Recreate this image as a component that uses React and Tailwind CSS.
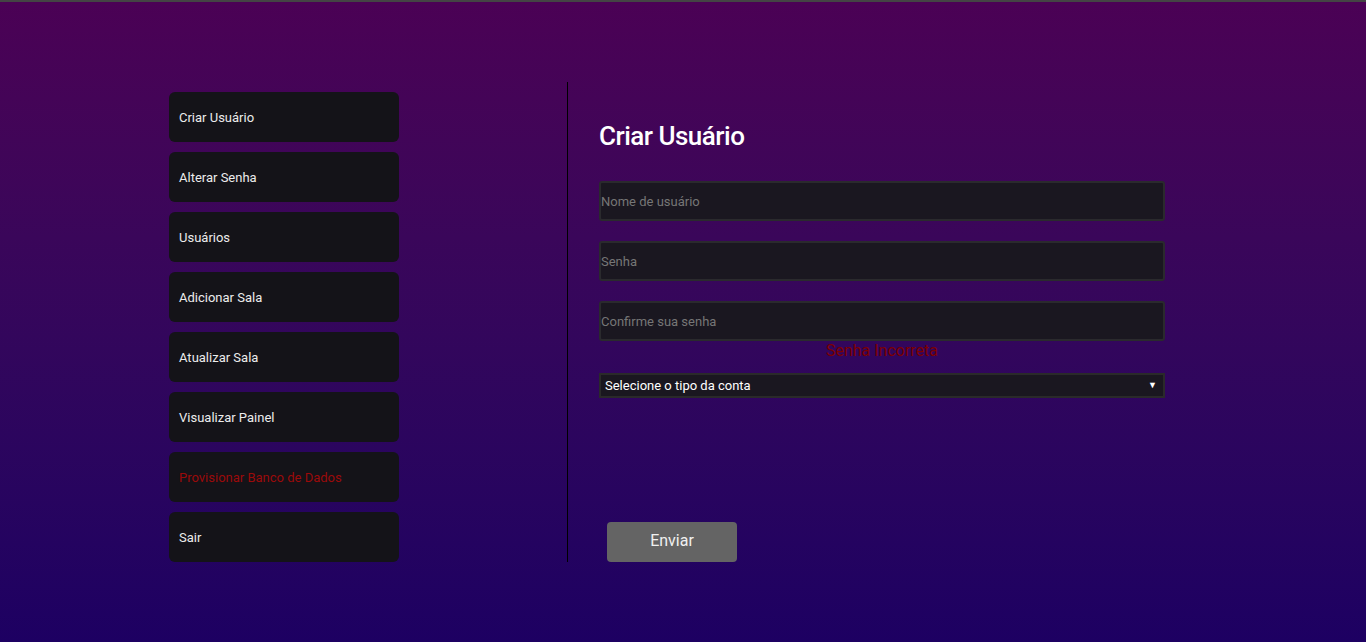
import React from 'react';

const MENU = [
  { label: 'Criar Usuário' },
  { label: 'Alterar Senha' },
  { label: 'Usuários' },
  { label: 'Adicionar Sala' },
  { label: 'Atualizar Sala' },
  { label: 'Visualizar Painel' },
  { label: 'Provisionar Banco de Dados', danger: true },
  { label: 'Sair' },
];

function MenuButton({ label, danger }) {
  return (
    <button
      className={`mt-[10px] flex h-[50px] w-[230px] items-center rounded-[6px] bg-[#141318] pl-[10px] pt-[2px] text-left text-[13px] ${
        danger ? 'text-[#9b0a0a]' : 'text-[#ececec]'
      }`}
    >
      {label}
    </button>
  );
}

function Field({ placeholder }) {
  return (
    <input
      type="text"
      placeholder={placeholder}
      className="h-[40px] w-[566px] rounded-[3px] border-2 border-[#2a2a2d] bg-[#1a1720] px-0 pt-[1px] text-[13px] text-white outline-none placeholder:text-[#767676]"
    />
  );
}

export default function App() {
  return (
    <div
      className="min-h-[642px] border-t-2 border-[#444444] bg-gradient-to-b from-[#4b0155] to-[#1d0062]"
      style={{ fontFamily: 'Roboto, "Noto Sans", sans-serif' }}
    >
      <div className="ml-[169px] mt-[80px] flex h-[480px]">
        {/* Sidebar */}
        <div className="flex w-[399px] flex-col border-r border-black">
          {MENU.map((m) => (
            <MenuButton key={m.label} {...m} />
          ))}
        </div>

        {/* Form */}
        <div className="flex flex-col pl-[31px]">
          <h2 className="mt-[39px] text-[26px] font-medium leading-[30px] tracking-[-0.5px] text-white">Criar Usuário</h2>

          <div className="mt-[30px] flex flex-col gap-[20px]">
            <Field placeholder="Nome de usuário" />
            <Field placeholder="Senha" />
            <Field placeholder="Confirme sua senha" />
          </div>
          <div className="h-[22px] text-center text-[16px] leading-[20px] text-[#7d0000]">Senha Incorreta</div>

          <div className="mt-[10px] flex h-[25px] w-[566px] items-center justify-between border-2 border-[#2a2a2a] bg-[#1a1720] pl-[4px] pr-[6px] text-[13px] text-white">
            <span>Selecione o tipo da conta</span>
            <span className="text-[9px]">▼</span>
          </div>

          <button className="ml-[8px] mt-auto h-[40px] w-[130px] rounded-[4px] bg-[#646464] pb-[2px] text-[16px] text-[#f0f0f0]">
            Enviar
          </button>
        </div>
      </div>
    </div>
  );
}
